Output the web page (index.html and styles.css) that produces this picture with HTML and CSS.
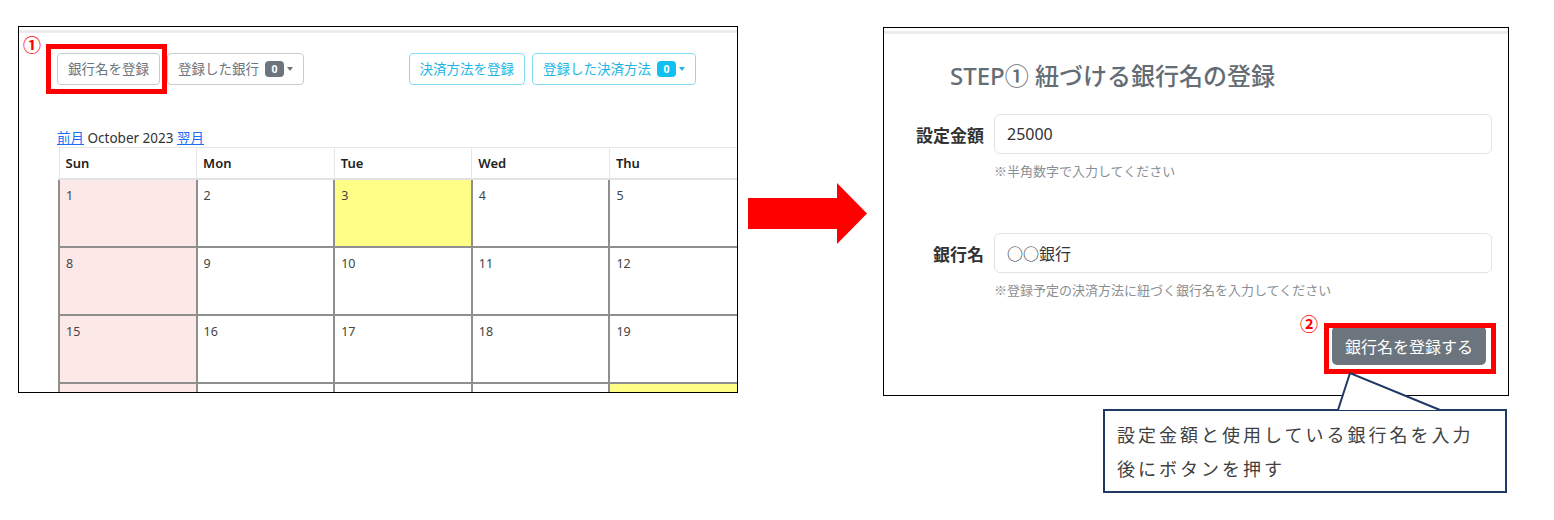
FILE: index.html
```html
<!DOCTYPE html>
<html lang="ja">
<head>
<meta charset="utf-8">
<title>銀行名の登録手順</title>
<link rel="stylesheet" href="styles.css">
</head>
<body>
<div class="stage">
  <div class="row">
    <section class="shot shot-left">
      <div class="topline"></div>
      <div class="toolbar">
        <div class="btn-group">
          <button class="btn btn-gray">銀行名を登録</button>
          <button class="btn btn-gray">登録した銀行<span class="badge badge-gray">0</span><span class="caret"></span></button>
        </div>
        <div class="btn-group">
          <button class="btn btn-cyan">決済方法を登録</button>
          <button class="btn btn-cyan">登録した決済方法<span class="badge badge-cyan">0</span><span class="caret caret-cyan"></span></button>
        </div>
      </div>
      <div class="month-nav"><a href="#">前月</a> October 2023 <a href="#">翌月</a></div>
      <table class="cal">
        <thead>
          <tr><th>Sun</th><th>Mon</th><th>Tue</th><th>Wed</th><th>Thu</th></tr>
        </thead>
        <tbody>
          <tr><td class="sun">1</td><td>2</td><td class="hl">3</td><td>4</td><td>5</td></tr>
          <tr><td class="sun">8</td><td>9</td><td>10</td><td>11</td><td>12</td></tr>
          <tr><td class="sun">15</td><td>16</td><td>17</td><td>18</td><td>19</td></tr>
          <tr><td class="sun"></td><td></td><td></td><td></td><td class="hl"></td></tr>
        </tbody>
      </table>
    </section>

    <svg class="arrow" width="120" height="62" viewBox="0 0 120 62" aria-hidden="true">
      <polygon points="0,15 89,15 89,0 119,30.5 89,61 89,46 0,46" fill="#ff0000"/>
    </svg>

    <section class="shot shot-right">
      <div class="topline"></div>
      <h2 class="step-title">STEP① 紐づける銀行名の登録</h2>
      <div class="form">
        <div class="form-row">
          <label class="label">設定金額</label>
          <div class="field">
            <div class="input">25000</div>
            <div class="help">※半角数字で入力してください</div>
          </div>
        </div>
        <div class="form-row row2">
          <label class="label">銀行名</label>
          <div class="field">
            <div class="input input-jp">○○銀行</div>
            <div class="help">※登録予定の決済方法に紐づく銀行名を入力してください</div>
          </div>
        </div>
        <div class="submit-row">
          <button class="btn-submit">銀行名を登録する</button>
        </div>
      </div>
    </section>
  </div>

  <span class="num num1">①</span>
  <div class="redbox redbox1"></div>
  <span class="num num2">②</span>
  <div class="redbox redbox2"></div>

  <div class="callout">設定金額と使用している銀行名を入力<br>後にボタンを押す</div>
  <svg class="pointer" width="120" height="42" viewBox="0 0 120 42" aria-hidden="true">
    <polygon points="8,40 20,3 110,40" fill="#ffffff"/>
    <polyline points="8,40 20,3 110,40" fill="none" stroke="#203864" stroke-width="2"/>
  </svg>
</div>
</body>
</html>
```

FILE: styles.css
```css
* { box-sizing: border-box; }
html, body { margin: 0; padding: 0; background: #ffffff; }
body {
  font-family: "Noto Sans", "Noto Sans CJK JP", sans-serif;
  color: #333;
}
.stage {
  position: relative;
  width: 1554px;
  height: 520px;
  overflow: hidden;
}
.row {
  display: flex;
  align-items: flex-start;
  padding: 26px 0 0 18px;
}
.shot {
  border: 1px solid #000;
  background: #fff;
  overflow: hidden;
}
.topline {
  margin-top: 3px;
  height: 3px;
  background: #ececec;
}
.shot-left {
  width: 720px;
  height: 367px;
}
.toolbar {
  display: flex;
  justify-content: space-between;
  padding: 20px 41px 0 38px;
}
.btn-group {
  display: flex;
  gap: 7px;
}
.btn {
  display: flex;
  align-items: center;
  height: 32px;
  padding: 0 10px;
  border-radius: 4px;
  background: #fff;
  font-family: "Noto Sans CJK JP", sans-serif;
  font-size: 13.5px;
  line-height: 1;
}
.btn-gray {
  border: 1px solid #c9cbcd;
  color: #6c757d;
}
.btn-cyan {
  border: 1px solid #86dcf2;
  color: #1fb6e2;
}
.badge {
  display: inline-flex;
  align-items: center;
  justify-content: center;
  width: 19px;
  height: 16px;
  margin-left: 6px;
  border-radius: 4px;
  color: #fff;
  font-family: "Noto Sans", sans-serif;
  font-size: 10.5px;
  font-weight: 700;
}
.badge-gray { background: #6c757d; }
.badge-cyan { background: #10c0f0; }
.caret {
  width: 0;
  height: 0;
  margin-left: 3px;
  border-left: 3.5px solid transparent;
  border-right: 3.5px solid transparent;
  border-top: 4px solid #6c757d;
}
.caret-cyan { border-top-color: #1fb6e2; }

.month-nav {
  margin-top: 45px;
  padding-left: 38px;
  height: 17px;
  font-family: "Noto Sans", "Noto Sans CJK JP", sans-serif;
  font-size: 13.5px;
  line-height: 17px;
  color: #333;
}
.month-nav a { color: #1a6ef5; text-decoration: underline; }

.cal {
  margin-left: 39px;
  width: 690px;
  table-layout: fixed;
  border-collapse: collapse;
  font-family: "Noto Sans", sans-serif;
}
.cal th {
  height: 31px;
  padding: 0 6px;
  border: 1px solid #e6e6e6;
  border-bottom: 2px solid #e2e2e2;
  text-align: left;
  font-size: 13px;
  font-weight: 600;
  color: #222;
}
.cal td {
  height: 68px;
  padding: 7px 6px 0;
  vertical-align: top;
  border: 2px solid #8f8f8f;
  font-size: 12.5px;
  color: #444;
}
.cal td.sun { background: #fde8e8; }
.cal td.hl { background: #ffff88; }

.arrow {
  margin: 157px 15px 0 10px;
  flex: none;
}

.shot-right {
  width: 626px;
  height: 369px;
  margin-top: 1px;
}
.step-title {
  margin: 27px 0 0 66px;
  font-family: "Noto Sans", "Noto Sans CJK JP", sans-serif;
  font-size: 24px;
  line-height: 30px;
  font-weight: 500;
  color: #646c74;
}
.form {
  padding: 23px 16px 0 0;
}
.form-row {
  display: grid;
  grid-template-columns: 100px 1fr;
  column-gap: 10px;
}
.row2 { margin-top: 53px; }
.label {
  height: 40px;
  display: flex;
  align-items: center;
  justify-content: flex-end;
  font-family: "Noto Sans CJK JP", sans-serif;
  font-size: 17px;
  font-weight: 700;
  color: #333;
}
.input {
  height: 40px;
  display: flex;
  align-items: center;
  padding: 0 12px;
  border: 1px solid #e0e3e6;
  border-radius: 6px;
  font-family: "Noto Sans", "Noto Sans CJK JP", sans-serif;
  font-size: 16px;
  color: #333;
}
.input-jp {
  font-family: "Noto Sans CJK JP", sans-serif;
  font-weight: 400;
}
.help {
  margin-top: 8px;
  font-family: "Noto Sans CJK JP", sans-serif;
  font-size: 13px;
  line-height: 18px;
  color: #8a8f94;
}
.submit-row {
  display: flex;
  justify-content: flex-end;
  padding: 27px 6px 0 0;
}
.btn-submit {
  height: 39px;
  width: 154px;
  border: none;
  border-radius: 5px;
  background: #6c757d;
  color: #fff;
  font-family: "Noto Sans CJK JP", sans-serif;
  font-size: 16px;
}

.redbox {
  position: absolute;
  border: 5px solid #ff0000;
}
.redbox1 { left: 46px; top: 44px; width: 121px; height: 50px; }
.redbox2 { left: 1324px; top: 323px; width: 172px; height: 51px; }
.num {
  position: absolute;
  font-family: "Noto Sans CJK JP", sans-serif;
  font-size: 18px;
  line-height: 18px;
  font-weight: 700;
  color: #ff0000;
}
.num1 { left: 23px; top: 35px; }
.num2 { left: 1300px; top: 314px; }

.callout {
  position: absolute;
  left: 1103px;
  top: 409px;
  width: 404px;
  height: 84px;
  padding: 6px 0 0 12px;
  border: 2px solid #203864;
  background: #fff;
  font-family: "Noto Sans CJK JP", sans-serif;
  font-size: 18px;
  line-height: 34px;
  letter-spacing: 3px;
  color: #404040;
}
.pointer {
  position: absolute;
  left: 1330px;
  top: 370px;
}
```
